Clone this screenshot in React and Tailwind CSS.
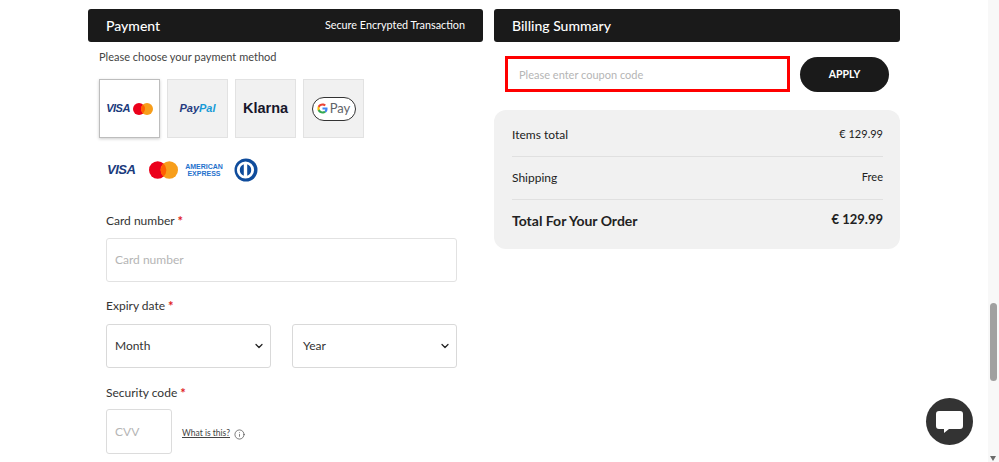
import React from 'react';
import { ChevronDown, Info } from "lucide-react";

const fontStack = "font-['Lato','Noto_Sans',sans-serif]";

const VisaMark = ({ className }) => (
  <span className={`font-['Liberation_Sans',sans-serif] font-bold italic tracking-[-0.5px] text-[#1a3a7c] ${className}`}>VISA</span>
);

const Mastercard = ({ width, height }) => (
  <svg width={width} height={height} viewBox="0 0 30 18">
    <circle cx="9" cy="9" r="9" fill="#eb001b" />
    <circle cx="21" cy="9" r="9" fill="#f79e1b" />
    <path d="M15 2.3a9 9 0 0 1 0 13.4a9 9 0 0 1 0-13.4z" fill="#ff5f00" />
  </svg>
);

const Diners = () => (
  <svg width="24" height="24" viewBox="0 0 24 24">
    <circle cx="12" cy="12" r="11.5" fill="#0f4c9c" />
    <circle cx="11.5" cy="12" r="8.6" fill="#fff" />
    <path d="M9.8 6.2v11.6a6.2 6.2 0 0 1 0-11.6zM13.2 6.2a6.2 6.2 0 0 1 0 11.6z" fill="#0f4c9c" />
  </svg>
);

const GooglePay = () => (
  <div className="flex h-[24px] w-[44px] items-center justify-center gap-[2px] rounded-full border-[1.5px] border-[#333] bg-white">
    <svg width="11" height="11" viewBox="0 0 24 24">
      <path d="M23 12.300c0-.8-.1-1.600-.2-2.300H12v4.400h6.200c-.3 1.400-1.100 2.600-2.300 3.400l3.700 2.900c2.200-2 3.400-5 3.400-8.400z" fill="#4285f4" />
      <path d="M12 23c3 0 5.600-1 7.500-2.700l-3.700-2.900c-1 .7-2.300 1.100-3.800 1.100-2.900 0-5.400-2-6.300-4.600H1.900v3C3.800 20.600 7.600 23 12 23z" fill="#34a853" />
      <path d="M5.700 13.900c-.5-1.300-.5-2.600 0-3.900V7H1.900c-1.200 2.500-1.200 7.500 0 9.900z" fill="#fbbc04" />
      <path d="M12 5.400c1.600 0 3.100.6 4.300 1.700l3.200-3.200C17.500 2.100 14.900 1 12 1 7.600 1 3.800 3.400 1.900 7l3.800 3c.9-2.600 3.400-4.600 6.300-4.600z" fill="#ea4335" />
    </svg>
    <span className="text-[13px] leading-none text-[#5f6368]">Pay</span>
  </div>
);

const MethodTile = ({ active, children }) => (
  <div className={`flex h-[59px] w-[61px] items-center justify-center border ${active ? 'border-[#bdbdbd] bg-white shadow-[0_1px_3px_rgba(0,0,0,0.2)]' : 'border-[#e2e2e2] bg-[#f1f1f1]'}`}>
    {children}
  </div>
);

const FieldLabel = ({ children }) => (
  <div className="flex h-[16px] items-center text-[12px] text-[#333]">
    {children}<span className="ml-[3px] mt-[1px] text-[13px] font-bold leading-none text-[#e01b24]">*</span>
  </div>
);

const SelectBox = ({ label, className }) => (
  <div className={`flex h-[44px] items-center justify-between rounded-[3px] border border-[#d9d9d9] pr-[5px] text-[12px] text-[#333] ${className}`}>
    {label}
    <ChevronDown className="h-[12px] w-[12px] text-[#222]" strokeWidth={2.5} />
  </div>
);

const SummaryRow = ({ label, value, className }) => (
  <div className={`flex items-center justify-between border-b border-[#e0e0e0] text-[#222] ${className}`}>
    <span className="text-[12px]">{label}</span>
    <span className="text-[11px]">{value}</span>
  </div>
);

export default function App() {
  return (
    <div className={`relative flex h-[462px] w-[999px] overflow-hidden bg-white ${fontStack}`}>
      <main className="flex flex-1 items-start gap-[11px] pl-[88px] pr-[88px] pt-[9px]">
        <section className="w-[395px] shrink-0">
          <div className="flex h-[33px] items-center justify-between rounded-[3px] bg-[#1a1a1a] pb-[1px] pl-[18px] pr-[18px] text-white">
            <span className="text-[14px] font-medium">Payment</span>
            <span className="text-[10.8px]">Secure Encrypted Transaction</span>
          </div>
          <div className="pl-[11px]">
            <p className="mt-[7px] text-[11px] leading-[16px] text-[#444]">Please choose your payment method</p>
            <div className="mt-[14px] flex gap-[7px]">
              <MethodTile active>
                <div className="flex items-center gap-[3px]">
                  <VisaMark className="text-[11px]" />
                  <Mastercard width={20} height={12} />
                </div>
              </MethodTile>
              <MethodTile>
                <span className="font-['Liberation_Sans',sans-serif] text-[11px] font-bold italic">
                  <span className="text-[#253b80]">Pay</span><span className="text-[#179bd7]">Pal</span>
                </span>
              </MethodTile>
              <MethodTile>
                <span className="font-['Liberation_Sans',sans-serif] text-[14.5px] font-bold text-[#17172b]">Klarna</span>
              </MethodTile>
              <MethodTile>
                <GooglePay />
              </MethodTile>
            </div>
            <div className="mt-[20px] flex items-center pl-[8px]">
              <VisaMark className="w-[42px] text-[13px]" />
              <Mastercard width={29} height={18} />
              <span className="ml-[7px] w-[38px] font-['Liberation_Sans',sans-serif] text-[7px] font-bold leading-[7.5px] text-center text-[#1f72cd]">AMERICAN EXPRESS</span>
              <span className="ml-[11px]"><Diners /></span>
            </div>
          </div>
          <div className="pl-[18px] pr-[26px]">
            <div className="mt-[31px]"><FieldLabel>Card number</FieldLabel></div>
            <div className="mt-[9px] flex h-[44px] items-center rounded-[3px] border border-[#e2e2e2] pl-[8px] text-[12px] text-[#b5b5b5]">Card number</div>
            <div className="mt-[16px]"><FieldLabel>Expiry date</FieldLabel></div>
            <div className="mt-[10px] grid grid-cols-2 gap-[21px]">
              <SelectBox label="Month" className="pl-[8px]" />
              <SelectBox label="Year" className="pl-[10px]" />
            </div>
            <div className="mt-[17px]"><FieldLabel>Security code</FieldLabel></div>
            <div className="mt-[8px] flex items-center">
              <div className="flex h-[45px] w-[66px] items-center rounded-[3px] border border-[#dcdcdc] pl-[8px] text-[12px] text-[#b5b5b5]">CVV</div>
              <span className="ml-[10px] mt-[3px] text-[8.5px] text-[#444] underline">What is this?</span>
              <Info className="ml-[4px] mt-[5px] h-[11px] w-[11px] text-[#444]" strokeWidth={1.5} />
            </div>
          </div>
        </section>

        <section className="w-[406px] shrink-0">
          <div className="flex h-[33px] items-center rounded-[3px] bg-[#1a1a1a] pb-[1px] pl-[18px] text-white">
            <span className="text-[14px] font-medium">Billing Summary</span>
          </div>
          <div className="mt-[14px] flex items-center pl-[11px] pr-[11px]">
            <div className="flex h-[36px] w-[285px] items-center border-[3px] border-[#ff0000] pl-[11px] pt-[2px] text-[11px] text-[#b5b5b5]">Please enter coupon code</div>
            <button className="ml-[10px] h-[35px] w-[89px] rounded-full bg-[#1a1a1a] pt-[1px] text-[10.5px] font-bold text-white">APPLY</button>
          </div>
          <div className="mt-[18px] rounded-[12px] bg-[#f1f1f1] pl-[18px] pr-[17px]">
            <SummaryRow label="Items total" value="€ 129.99" className="h-[47px] pt-[3px]" />
            <SummaryRow label="Shipping" value="Free" className="h-[43px] pb-[1px]" />
            <div className="flex h-[49px] items-center justify-between pb-[11px] pt-[2px] font-bold text-[#222]">
              <span className="text-[14px]">Total For Your Order</span>
              <span className="text-[13px]">€ 129.99</span>
            </div>
          </div>
        </section>
      </main>

      <div className="relative w-[11px] shrink-0 bg-[#f8f8f8]">
        <div className="ml-[2px] mt-[303px] h-[78px] w-[7px] rounded-full bg-[#a0a0a0]" />
        <div className="ml-[2px] mt-[75px] h-0 w-0 border-x-[3.5px] border-t-[5px] border-x-transparent border-t-[#6b6b6b]" />
      </div>

      <button className="absolute left-[926px] top-[398px] flex h-[47px] w-[47px] items-center justify-center rounded-full bg-[#333]">
        <svg width="27" height="22" viewBox="0 0 27 22">
          <path d="M3 0h21a3 3 0 0 1 3 3v12a3 3 0 0 1-3 3H13l-5 4v-4H3a3 3 0 0 1-3-3V3a3 3 0 0 1 3-3z" fill="#fff" />
        </svg>
      </button>
    </div>
  );
}
